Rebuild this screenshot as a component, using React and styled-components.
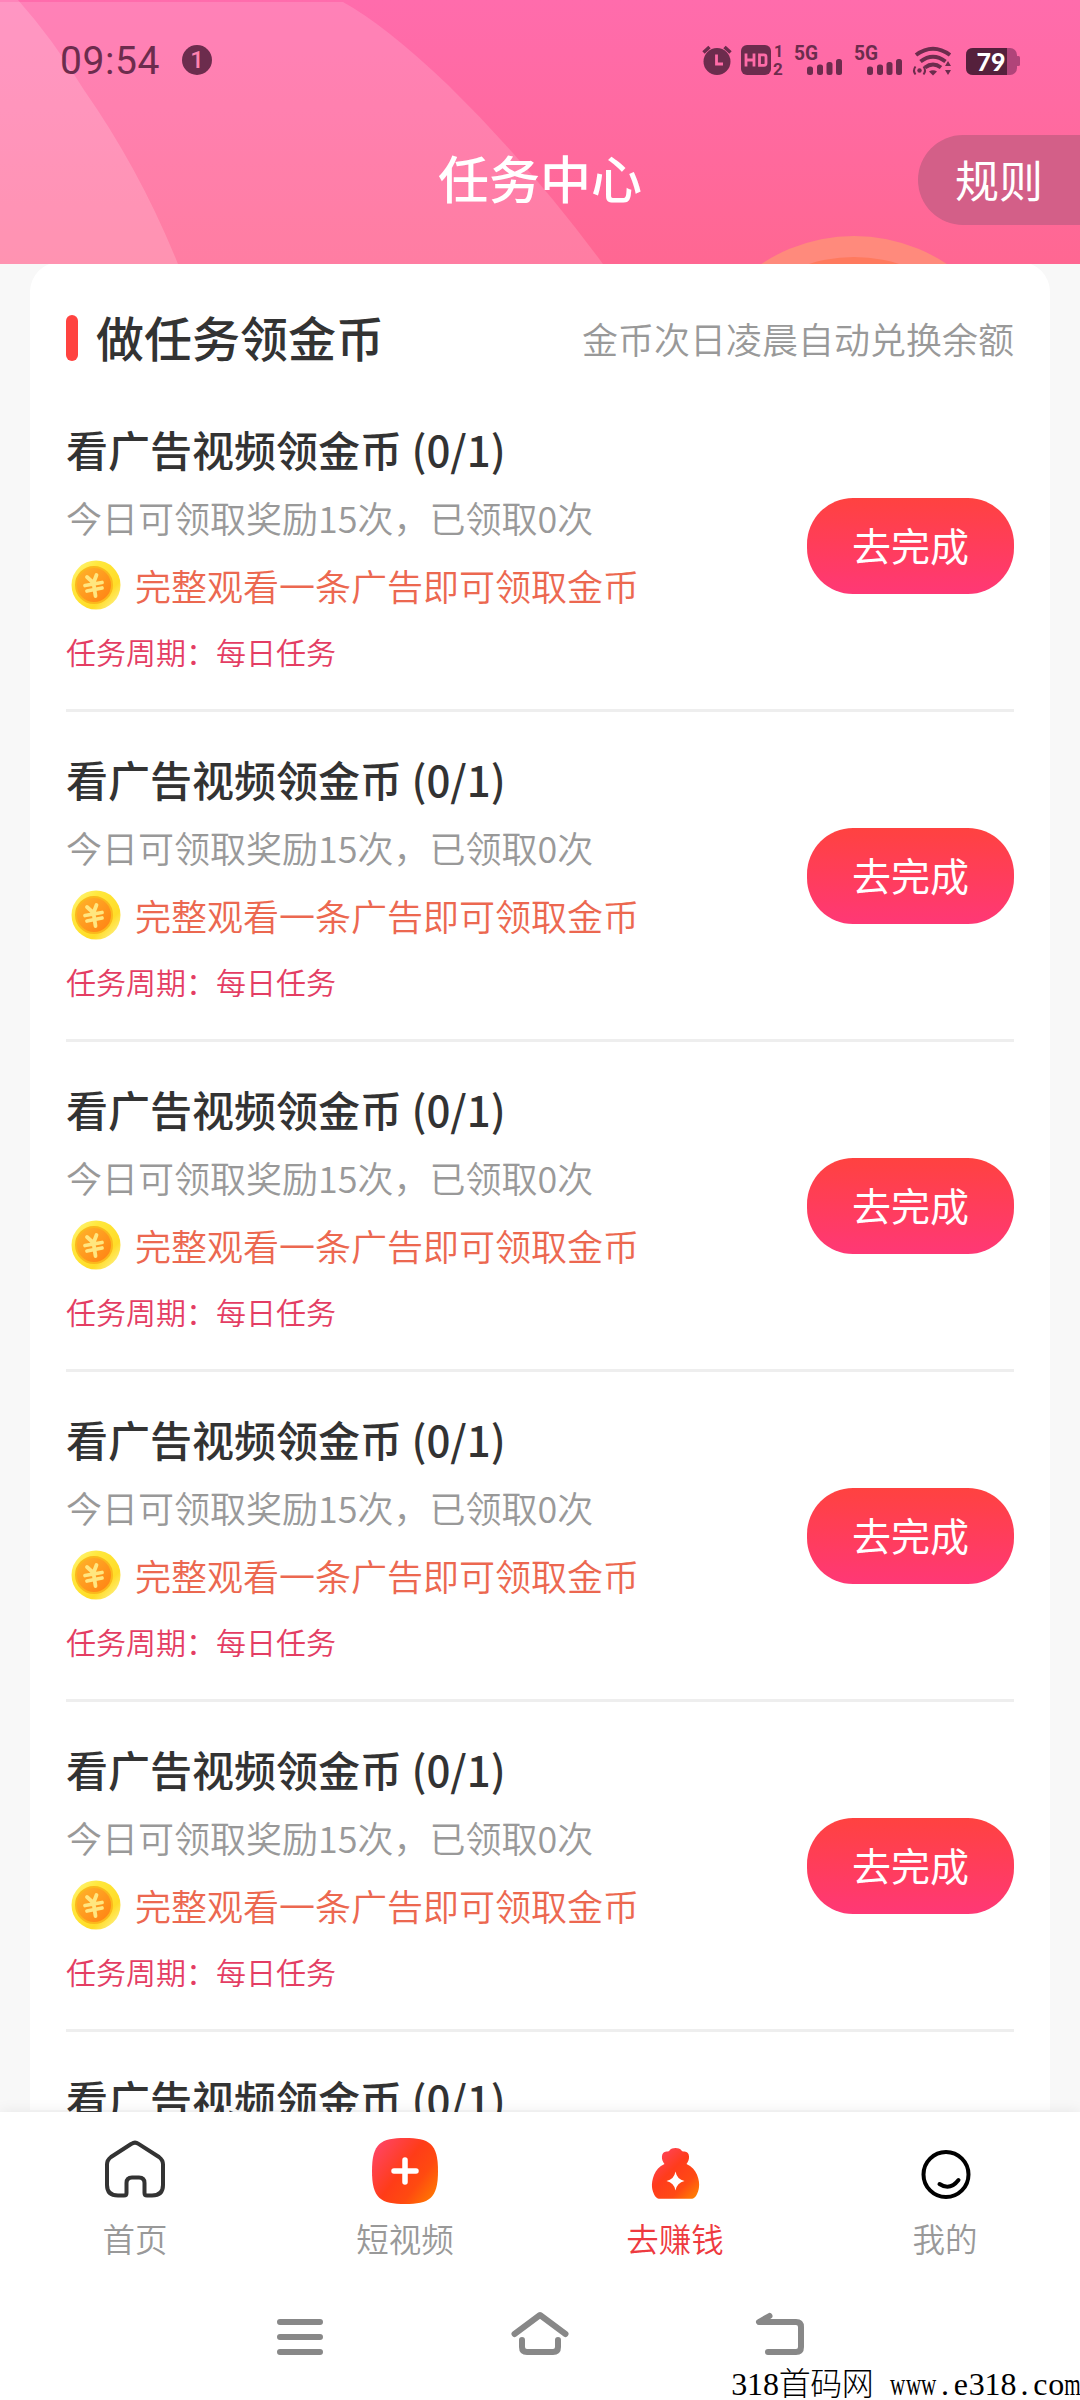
import React from 'react'
import styled, { createGlobalStyle } from 'styled-components'

const GlobalStyle = createGlobalStyle`
  * {
    box-sizing: border-box;
  }
  body {
    margin: 0;
    background: #f8f8f8;
    font-family: "Noto Sans CJK SC", "Noto Sans", sans-serif;
  }
`;

const Screen = styled.div`
  display: flex;
  flex-direction: column;
  width: 1080px;
  height: 2400px;
  overflow: hidden;
`;

const Header = styled.header`
  position: relative;
  flex: none;
  height: 264px;
  background: linear-gradient(#ff6cac, #ff6792);
`;

const HeaderArt = styled.svg`
  position: absolute;
  inset: 0;
`;

const StatusBar = styled.div`
  position: relative;
  display: flex;
  justify-content: space-between;
  align-items: center;
  height: 120px;
  padding: 0 58px 0 60px;

  svg {
    overflow: visible;
  }
`;

const StatusLeft = styled.div`
  display: flex;
  align-items: center;
  gap: 22px;
`;

const Clock = styled.span`
  padding-top: 2px;
  font-family: Roboto, sans-serif;
  font-size: 39px;
  line-height: 46px;
  letter-spacing: 0.6px;
  color: #6c2c4d;
`;

const Notice = styled.span`
  width: 30px;
  height: 30px;
  border-radius: 50%;
  background: #6c2c4d;
  color: #ff82af;
  font: 500 24px/31px Roboto, sans-serif;
  text-align: center;
`;

const TitleBar = styled.div`
  position: relative;
  display: grid;
  grid-template-columns: 1fr auto 1fr;
  align-items: center;
  height: 120px;
`;

const Title = styled.h1`
  grid-column: 2;
  margin: 0;
  padding-bottom: 6px;
  font-size: 51px;
  font-weight: 500;
  line-height: 74px;
  color: #fff;
`;

const RuleButton = styled.button`
  justify-self: end;
  width: 162px;
  height: 90px;
  padding: 0 0 2px 37px;
  border: 0;
  border-radius: 45px 0 0 45px;
  background: #d35f88;
  color: #fff;
  font-family: inherit;
  font-size: 44px;
  text-align: left;
`;

const Body = styled.main`
  flex: 1;
  min-height: 0;
  overflow: hidden;
  padding: 0 30px;
`;

const Card = styled.section`
  height: 100%;
  margin-top: -2px;
  padding: 0 36px;
  border-radius: 30px 30px 0 0;
  background: #fff;
`;

const CardHead = styled.div`
  display: flex;
  align-items: center;
  height: 120px;
  padding-top: 32px;
`;

const Mark = styled.i`
  width: 12px;
  height: 46px;
  margin-right: 18px;
  border-radius: 6px;
  background: #ff4340;
`;

const CardTitle = styled.h2`
  flex: 1;
  margin: 0;
  padding-bottom: 5px;
  font-size: 48px;
  font-weight: 500;
  color: #333;
`;

const CardHint = styled.span`
  font-size: 36px;
  font-weight: 350;
  color: #999;
`;

const Task = styled.article`
  display: flex;
  align-items: center;
  justify-content: space-between;
  height: 330px;
  border-bottom: 3px solid #eee;

  &:last-child {
    border-bottom: 0;
  }
`;

const TaskInfo = styled.div`
  display: flex;
  flex-direction: column;
  align-self: flex-start;
  margin-top: 34px;
`;

const TaskName = styled.h3`
  margin: 0;
  font-size: 42px;
  font-weight: 500;
  line-height: 66px;
  color: #333;
`;

const TaskCount = styled.p`
  margin: 0;
  font-size: 36px;
  font-weight: 350;
  line-height: 70px;
  color: #999;
`;

const Reward = styled.p`
  display: flex;
  align-items: center;
  gap: 11px;
  margin: 0;
  padding-left: 4px;
  font-size: 36px;
  font-weight: 350;
  line-height: 66px;
  color: #ec6850;

  svg {
    margin-top: 4px;
  }
`;

const Cycle = styled.p`
  margin: 0;
  font-size: 30px;
  font-weight: 350;
  line-height: 66px;
  color: #e43d63;
`;

const GoButton = styled.button`
  width: 207px;
  height: 96px;
  padding: 0 0 4px;
  border: 0;
  border-radius: 46px;
  background: linear-gradient(#ff4240, #ff3876);
  color: #fff;
  font-family: inherit;
  font-size: 39px;
  line-height: 92px;
`;

const TabBar = styled.nav`
  position: relative;
  flex: none;
  display: grid;
  grid-template-columns: repeat(4, 1fr);
  height: 168px;
  background: #fff;
  box-shadow: 0 0 14px rgba(0, 0, 0, 0.08);
`;

const Tab = styled.a`
  display: flex;
  flex-direction: column;
  align-items: center;
  padding-top: 24px;
  font-size: 32.5px;
  font-weight: 350;
  line-height: 48px;
  color: ${props => props.$active ? '#ee3a40' : '#999'};

  svg {
    margin-bottom: 6px;
  }
`;

const SystemBar = styled.footer`
  position: relative;
  flex: none;
  display: flex;
  justify-content: center;
  gap: 180px;
  height: 120px;
  padding-top: 25px;
  background: #fff;
`;

const Watermark = styled.div`
  position: absolute;
  right: 0;
  bottom: -1px;
  display: flex;
  height: 34px;
  font-family: "Liberation Serif", "Noto Sans CJK SC", serif;
  font-size: 32px;
  font-weight: 300;
  line-height: 34px;
  color: #000;
`;

const Cell = styled.span`
  display: flex;
  justify-content: center;
  width: ${props => props.$wide ? 31.5 : 15.9}px;

  span {
    transform: scaleX(${props => props.$squeeze});
  }
`;

const ink = '#6c2c4d';

const StatusIcons = () => (
  <svg width="322" height="32" viewBox="0 0 322 32" fill={ink}>
    {/* alarm */}
    <circle cx="17" cy="17.500" r="13.500" />
    <path d="M3.500 8.500l6-5.500M30.500 8.500l-6-5.500" stroke={ink} strokeWidth="3.500" />
    <path d="M16.500 10.500v9.500h6.500" fill="none" stroke="#ff6ca8" strokeWidth="2.800" />
    {/* HD 1/2 */}
    <rect x="41" y="1" width="30" height="30" rx="6" />
    <path d="M46 9.500v13M46 16h8M54 9.500v13M59.500 10.800h4.500q2 0 2 2v6.500q0 2-2 2h-4.500z" fill="none" stroke="#ff6ca8" strokeWidth="2.800" />
    <text x="74" y="13" fontFamily="Roboto" fontWeight="700" fontSize="16">1</text>
    <text x="73" y="31" fontFamily="Roboto" fontWeight="700" fontSize="17">2</text>
    {[0, 60].map(x => (
      <g key={x} transform={`translate(${x} 0)`}>
        <text x="94" y="16" fontFamily="Roboto" fontWeight="700" fontSize="21" textLength="24" lengthAdjust="spacingAndGlyphs">5G</text>
        <rect x="107" y="22.500" width="6" height="8.500" rx="2.500" />
        <rect x="117" y="20.500" width="6" height="10.500" rx="2.500" />
        <rect x="126.500" y="18" width="6" height="13" rx="2.500" />
        <rect x="136" y="15" width="6" height="16" rx="2.500" />
      </g>
    ))}
    {/* wifi */}
    <g fill="none" stroke={ink} strokeWidth="4">
      <path d="M216 11q17-12.500 34 0" />
      <path d="M220.500 17.500q12.500-9.500 25 0" />
      <path d="M225 23.500q8-6 16 0" />
    </g>
    <path d="M229 27.500q4-2.500 8 0l-4 4zM245 22l3-5 3 5zM245 26l3 5 3-5z" />
    <circle cx="219.500" cy="26.500" r="2.200" />
    <path d="M215.500 22.500q-3 4 0 8M223.500 22.500q3 4 0 8" fill="none" stroke={ink} strokeWidth="2" />
    {/* battery */}
    <rect x="266" y="4" width="51" height="27" rx="7" fill="#b04479" />
    <rect x="316" y="12" width="4" height="10" rx="1.500" fill="#b04479" />
    <path d="M273 4h34v27h-34q-7 0-7-7v-13q0-7 7-7z" fill="#55203c" />
    <text x="291" y="26.500" textAnchor="middle" fontFamily="Lato" fontWeight="900" fontSize="25" fill="#fff">79</text>
  </svg>
)

const Coin = () => (
  <svg width="54" height="54" viewBox="0 0 54 54">
    <defs>
      <linearGradient id="rim" x1="0" y1="0" x2="1" y2="1">
        <stop offset="0" stopColor="#fff98a" />
        <stop offset="0.300" stopColor="#ffe83c" />
        <stop offset="0.700" stopColor="#ffdc28" />
        <stop offset="1" stopColor="#fff9a8" />
      </linearGradient>
      <linearGradient id="face" x1="0" y1="0" x2="1" y2="1">
        <stop offset="0" stopColor="#ffb52c" />
        <stop offset="1" stopColor="#ff7f12" />
      </linearGradient>
    </defs>
    <circle cx="26" cy="25" r="24.500" fill="url(#rim)" />
    <circle cx="24" cy="25" r="18" fill="url(#face)" stroke="#fbb81c" strokeWidth="2" />
    <path d="M17 17l6.500 6 3-8M15 25.500l17-3M17 31l15-3M23.500 23l2 13" fill="none" stroke="#ffe680" strokeWidth="3.800" strokeLinecap="round" />
  </svg>
)

const HomeIcon = () => (
  <svg width="68" height="72" viewBox="0 0 68 72" fill="none" stroke="#333" strokeWidth="4" strokeLinejoin="round">
    <path d="M30.500 7.800Q34 5.500 37.500 7.800L58 21Q62 24 62 28.500V49Q62 59.500 51 59.500H46Q43.500 59.500 43.500 57V47Q43.500 41.500 38 41.500H31Q25.500 41.500 25.500 47V57Q25.500 59.500 23 59.500H17Q6 59.500 6 49V28.500Q6 24 10 21Z" />
  </svg>
)

const VideoIcon = () => (
  <svg width="68" height="72" viewBox="0 0 68 72">
    <defs>
      <linearGradient id="video" x1="0" y1="0.150" x2="1" y2="0.900">
        <stop offset="0" stopColor="#ff4566" />
        <stop offset="0.450" stopColor="#ff3c18" />
        <stop offset="0.700" stopColor="#ff4a10" />
        <stop offset="1" stopColor="#ff7d00" />
      </linearGradient>
    </defs>
    <path d="M34 2C58 2 67 7 67 35S58 68 34 68 1 63 1 35 10 2 34 2Z" fill="url(#video)" />
    <path d="M34 24v22M23 35h22" stroke="#fff" strokeWidth="5.500" strokeLinecap="round" />
  </svg>
)

const MoneyIcon = () => (
  <svg width="68" height="72" viewBox="0 0 68 72">
    <defs>
      <linearGradient id="money" x1="0.100" y1="0" x2="1" y2="1">
        <stop offset="0" stopColor="#ff4566" />
        <stop offset="0.400" stopColor="#ff3c1c" />
        <stop offset="0.700" stopColor="#ff4a14" />
        <stop offset="1" stopColor="#ff8a00" />
      </linearGradient>
    </defs>
    <path d="M23.500 28C20 24 19.500 16 25.500 15.500Q28 15.800 28.500 14.500C31 11.300 38 11.300 40.500 14.500Q41 15.800 43.500 15.500C49.500 16 49 24 45.500 28C56 32 59 45 58 51C57.500 57 54 62.800 51 62.800H18C15 62.800 11.500 57 11 51C10.500 45 13 32 23.500 28Z" fill="url(#money)" />
    <path d="M34.500 35.500Q36 43.500 43.500 45Q36 46.500 34.500 54.500Q33 46.500 25.500 45Q33 43.500 34.500 35.500Z" fill="#fff" />
  </svg>
)

const MineIcon = () => (
  <svg width="68" height="72" viewBox="0 0 68 72" fill="none" stroke="#000" strokeWidth="4" strokeLinecap="round">
    <circle cx="35" cy="38.500" r="22.500" />
    <path d="M28.500 48Q39 55 47.500 44" />
  </svg>
)

const tabs = [
  { label: '首页', Icon: HomeIcon },
  { label: '短视频', Icon: VideoIcon },
  { label: '去赚钱', Icon: MoneyIcon, active: true },
  { label: '我的', Icon: MineIcon },
];

// folded: 화면 아래에 걸친 항목은 제목만 그림
const TaskItem = ({ folded }) => (
  <Task>
    <TaskInfo>
      <TaskName>看广告视频领金币 (0/1)</TaskName>
      {!folded && (
        <>
          <TaskCount>今日可领取奖励15次，已领取0次</TaskCount>
          <Reward><Coin />完整观看一条广告即可领取金币</Reward>
          <Cycle>任务周期：每日任务</Cycle>
        </>
      )}
    </TaskInfo>
    {!folded && <GoButton>去完成</GoButton>}
  </Task>
)

const App = () => {
  return (
    <Screen>
      <GlobalStyle />
      <Header>
        <HeaderArt width="1080" height="264" viewBox="0 0 1080 264">
          <path d="M0 2H343Q385 25 448 85Q530 165 603 264H0Z" fill="#fff" fillOpacity="0.150" />
          <path d="M0 0H18Q52 38 84 90Q140 170 178 264H0Z" fill="#fff" fillOpacity="0.170" />
          <circle cx="854" cy="404" r="168" fill="#ff8a7c" />
          <circle cx="854" cy="405" r="148" fill="#ff7a5e" />
        </HeaderArt>
        <StatusBar>
          <StatusLeft>
            <Clock>09:54</Clock>
            <Notice>1</Notice>
          </StatusLeft>
          <StatusIcons />
        </StatusBar>
        <TitleBar>
          <Title>任务中心</Title>
          <RuleButton>规则</RuleButton>
        </TitleBar>
      </Header>
      <Body>
        <Card>
          <CardHead>
            <Mark />
            <CardTitle>做任务领金币</CardTitle>
            <CardHint>金币次日凌晨自动兑换余额</CardHint>
          </CardHead>
          {[1, 2, 3, 4, 5, 6].map(id => <TaskItem key={id} folded={id === 6} />)}
        </Card>
      </Body>
      <TabBar>
        {tabs.map(({ label, Icon, active }) => (
          <Tab key={label} $active={active}>
            <Icon />
            {label}
          </Tab>
        ))}
      </TabBar>
      <SystemBar>
        <svg width="60" height="60" viewBox="0 0 60 60" stroke="#888" strokeWidth="6" strokeLinecap="round">
          <path d="M10 17H50M10 32H50M10 47H50" />
        </svg>
        <svg width="60" height="60" viewBox="0 0 60 60" fill="none" stroke="#888" strokeWidth="6" strokeLinecap="round" strokeLinejoin="round">
          <path d="M4.500 29L30 10L55.500 29M12 35V42Q12 47 17 47H43Q48 47 48 42V35" />
        </svg>
        <svg width="60" height="60" viewBox="0 0 60 60" fill="none" stroke="#888" strokeWidth="6" strokeLinecap="round" strokeLinejoin="round">
          <path d="M19.500 11L9 17H46Q51 17 51 22V42Q51 47 46 47H18" />
        </svg>
        <Watermark>
          {[...'318首码网 www.e318.com'].map((ch, i) => (
            <Cell key={i} $wide={ch > '\u4e00'} $squeeze={'wm'.includes(ch) ? 0.66 : 1}>
              <span>{ch}</span>
            </Cell>
          ))}
        </Watermark>
      </SystemBar>
    </Screen>
  )
}

export default App
